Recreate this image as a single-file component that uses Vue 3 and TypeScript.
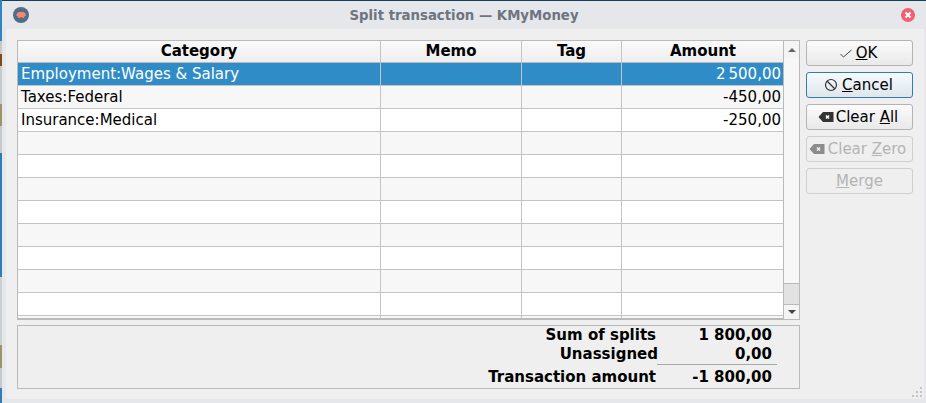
<script setup lang="ts">
interface Split {
  category: string;
  amount: string;
}

const splits: Split[] = [
  { category: "Employment:Wages & Salary", amount: "2\u202f500,00" },
  { category: "Taxes:Federal", amount: "-450,00" },
  { category: "Insurance:Medical", amount: "-250,00" },
];

const rows: Split[] = [
  ...splits,
  ...Array.from({ length: 9 }, () => ({ category: "", amount: "" })),
];

// what shows of the desktop behind the window, along its left edge
const edge = [
  { height: 41, color: "#2f86bf" },
  { height: 13, color: "#c6c8ca" },
  { height: 12, color: "#7a4a1c" },
  { height: 38, color: "#c6c8ca" },
  { height: 22, color: "#9a9468" },
  { height: 27, color: "#c6c8ca" },
  { height: 124, color: "#2f7db5" },
  { height: 68, color: "#cdcfd0" },
  { height: 23, color: "#9a9468" },
  { height: 20, color: "#c6c8ca" },
  { height: 15, color: "#2f7db5" },
];
</script>

<template>
  <div class="desktop">
    <div class="edge">
      <div
        v-for="(part, i) in edge"
        :key="i"
        :style="{ height: part.height + 'px', background: part.color }"
      ></div>
    </div>
    <div class="window">
      <header class="titlebar">
        <span class="app-icon">
          <svg width="16" height="16" viewBox="0 0 16 16">
            <circle cx="8" cy="8" r="8" fill="#4f6d85" />
            <path d="M3.500 7 5.500 5h5L12.500 6.500l.5 2-1.500 1-.5 1.500H9.500v-.8H7v.8H5.500L5 9.500 3.500 9z" fill="#f6876f" />
          </svg>
        </span>
        <span class="title">Split transaction — KMyMoney</span>
        <span class="close">
          <svg width="14" height="14" viewBox="0 0 14 14">
            <circle cx="7" cy="7" r="7" fill="#f25f70" />
            <path d="M4.500 4.500l5 5M9.500 4.500l-5 5" stroke="#fff" stroke-width="2" />
          </svg>
        </span>
      </header>
      <main class="body">
        <div class="top">
          <div class="table-frame">
            <div class="table">
              <div class="head">
                <div class="cell">Category</div>
                <div class="cell">Memo</div>
                <div class="cell">Tag</div>
                <div class="cell last">Amount</div>
              </div>
              <div
                v-for="(row, i) in rows"
                :key="i"
                class="row"
                :class="{ selected: i === 0, alt: i % 2 === 1 }"
              >
                <div class="cell text">{{ row.category }}</div>
                <div class="cell"></div>
                <div class="cell"></div>
                <div class="cell last num">{{ row.amount }}</div>
              </div>
            </div>
            <div class="scrollbar">
              <div class="arrow"><span class="tri up"></span></div>
              <div class="track"></div>
              <div class="thumb"></div>
              <div class="arrow down"><span class="tri dn"></span></div>
            </div>
          </div>
          <div class="buttons">
            <button class="btn ok">
              <svg width="16" height="16" viewBox="0 0 16 16">
                <path d="M2.500 9l3 3L13.500 5" fill="none" stroke="#444" stroke-width="1" />
              </svg>
              <span><u>O</u>K</span>
            </button>
            <button class="btn focus">
              <svg width="14" height="14" viewBox="0 0 14 14">
                <circle cx="7" cy="7" r="5.500" fill="none" stroke="#333" stroke-width="1.200" />
                <path d="M3 3l8 8" stroke="#333" stroke-width="1.200" />
              </svg>
              <span><u>C</u>ancel</span>
            </button>
            <button class="btn clear-all">
              <svg width="16" height="12" viewBox="0 0 16 12">
                <path d="M5 1h10.500v10H5L.5 6z" fill="#333" />
                <path d="M8 4.500l3 3M11 4.500l-3 3" stroke="#fff" stroke-width="1.500" />
              </svg>
              <span>Clear <u>A</u>ll</span>
            </button>
            <button class="btn clear-zero disabled" disabled>
              <svg width="16" height="12" viewBox="0 0 16 12">
                <path d="M5 1h10.500v10H5L.5 6z" fill="#8c8c8c" />
                <path d="M8 4.500l3 3M11 4.500l-3 3" stroke="#eee" stroke-width="1.500" />
              </svg>
              <span>Clear <u>Z</u>ero</span>
            </button>
            <button class="btn disabled" disabled>
              <span><u>M</u>erge</span>
            </button>
          </div>
        </div>
        <section class="summary">
          <div class="sum-line">
            <span class="sum-label">Sum of splits</span>
            <span class="sum-value">1 800,00</span>
          </div>
          <div class="sum-line">
            <span class="sum-label">Unassigned</span>
            <span class="sum-value rule">0,00</span>
          </div>
          <div class="sum-line total">
            <span class="sum-label">Transaction amount</span>
            <span class="sum-value">-1 800,00</span>
          </div>
        </section>
        <div class="grip">
          <svg width="10" height="10" viewBox="0 0 10 10">
            <path d="M8 0h2v2H8zM4 4h2v2H4zM8 4h2v2H8zM0 8h2v2H0zM4 8h2v2H4zM8 8h2v2H8z" fill="#c4c4c4" />
          </svg>
        </div>
      </main>
    </div>
  </div>
</template>

<style>
html,
body {
  margin: 0;
  height: 100%;
  overflow: hidden;
}
</style>

<style scoped>
.desktop {
  width: 926px;
  height: 403px;
  font-family: "DejaVu Sans", sans-serif;
  font-size: 15px;
  color: #000;
  display: flex;
  overflow: hidden;
}

.edge {
  width: 2px;
  flex: none;
}

.window {
  width: 924px;
  height: 403px;
  background: #e6e7ea;
  border-top: 1px solid #16405a;
  box-sizing: border-box;
  display: flex;
  flex-direction: column;
}

.titlebar {
  height: 28px;
  flex: none;
  display: flex;
  align-items: center;
  position: relative;
  justify-content: center;
}

.app-icon {
  position: absolute;
  left: 11px;
  top: 6px;
  line-height: 0;
}

.close {
  position: absolute;
  right: 11px;
  top: 7px;
  line-height: 0;
}

.title {
  font-size: 13.3px;
  font-weight: 700;
  color: #6d7482;
}

.body {
  margin: 0 2px 4px 4px;
  flex: 1;
  background: #efefef;
  padding: 11px 8px 0 11px;
  position: relative;
}

.top {
  display: flex;
  gap: 6px;
}

.table-frame {
  width: 783px;
  height: 280px;
  border: 1px solid #bababa;
  box-sizing: border-box;
  display: flex;
  background: #fff;
}

.table {
  width: 766px;
  height: 100%;
  overflow: hidden;
  border-bottom: 1px solid #bababa;
  box-sizing: border-box;
}

.head,
.row {
  display: grid;
  grid-template-columns: 363px 141px 100px 162px;
}

.head {
  height: 22px;
  font-weight: 700;
  background: linear-gradient(#fafafa, #eeeeee);
  border-bottom: 1px solid #bababa;
  box-sizing: border-box;
}

.head .cell {
  text-align: center;
  line-height: 21px;
}

.row {
  height: 23px;
  box-sizing: border-box;
  border-bottom: 1px solid #c4c4c4;
  background: #fff;
  line-height: 22px;
}

.row.alt {
  background: #f7f7f7;
}

.row.selected {
  background: #308cc6;
  color: #fff;
}

.cell {
  border-right: 1px solid #c4c4c4;
  box-sizing: border-box;
  min-width: 0;
  white-space: pre;
}

.cell.last {
  border-right: none;
}

.text {
  padding-left: 3px;
}

.num {
  text-align: right;
  padding-right: 3px;
}

.scrollbar {
  width: 15px;
  flex: none;
  border-left: 1px solid #bababa;
  display: flex;
  flex-direction: column;
  background: #f7f7f7;
}

.arrow {
  height: 17px;
  flex: none;
  background: #f4f4f4;
  display: flex;
  align-items: center;
  justify-content: center;
}

.arrow.down {
  border-top: 1px solid #bababa;
  height: 14px;
}

.track {
  flex: 1;
}

.thumb {
  height: 20px;
  flex: none;
  background: #e2e2e2;
  border-top: 1px solid #bababa;
}

.tri {
  width: 0;
  height: 0;
  border-left: 4px solid transparent;
  border-right: 4px solid transparent;
}

.tri.up {
  border-bottom: 4px solid #666;
}

.tri.dn {
  border-top: 4px solid #444;
}

.buttons {
  display: flex;
  flex-direction: column;
  gap: 6px;
}

.btn {
  width: 107px;
  height: 26px;
  box-sizing: border-box;
  border: 1px solid #b4b4b4;
  border-radius: 3px;
  background: linear-gradient(#fbfbfb, #e9e9e9);
  font: inherit;
  color: #000;
  display: flex;
  align-items: center;
  justify-content: center;
  gap: 2px;
  padding: 0;
}

.btn svg {
  flex: none;
}

.btn.ok {
  padding-right: 4px;
}

.btn.focus {
  border-color: #2f7fae;
  background: linear-gradient(#f5fafd, #dfe6ea);
  gap: 4px;
  padding-right: 2px;
}

.btn.clear-all {
  padding-right: 3px;
}

.btn.clear-zero {
  gap: 3px;
  padding-right: 4px;
}

.btn.disabled {
  color: #b4b4b4;
  background: #efefef;
  border-color: #cfcfcf;
}

.summary {
  width: 783px;
  height: 64px;
  margin-top: 5px;
  box-sizing: border-box;
  border: 1px solid #bababa;
  font-weight: 700;
}

.sum-line {
  display: flex;
  justify-content: flex-end;
  height: 19px;
  line-height: 19px;
  padding-right: 27px;
}

.sum-line.total {
  height: 23px;
  line-height: 26px;
}

.sum-label {
  white-space: pre;
}

.sum-value {
  width: 116px;
  text-align: right;
  white-space: pre;
}

.sum-value.rule {
  width: 120px;
  margin-right: -5px;
  padding-right: 5px;
  margin-left: -1px;
  box-sizing: border-box;
  height: 20px;
  border-bottom: 1px solid #a8a8a8;
}

.grip {
  position: absolute;
  right: 2px;
  bottom: 2px;
  line-height: 0;
}
</style>
